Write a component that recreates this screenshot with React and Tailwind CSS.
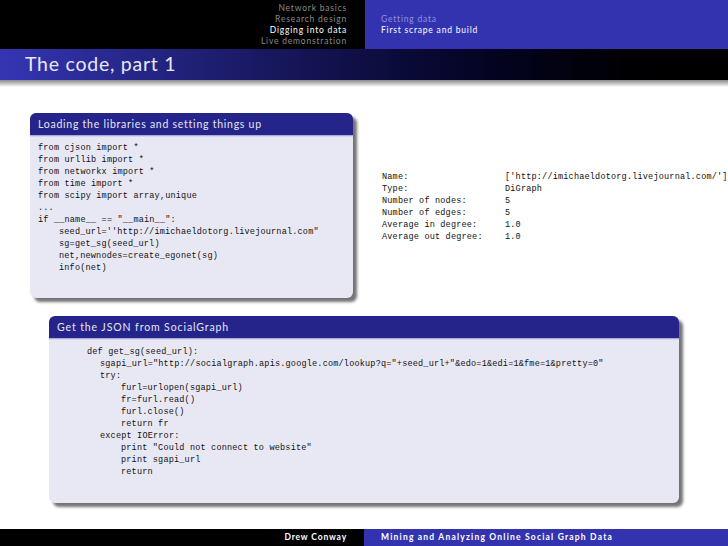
const sectionNames = ["Network basics", "Research design", "Digging into data", "Live demonstration"];

const infoRows = [
  ["Name:", "['http://imichaeldotorg.livejournal.com/']"],
  ["Type:", "DiGraph"],
  ["Number of nodes:", "5"],
  ["Number of edges:", "5"],
  ["Average in degree:", "1.0"],
  ["Average out degree:", "1.0"],
];

const loadCode = [
  [0, "from cjson import *"],
  [0, "from urllib import *"],
  [0, "from networkx import *"],
  [0, "from time import *"],
  [0, "from scipy import array,unique"],
  [0, "..."],
  [0, 'if __name__ == "__main__":'],
  [21, "seed_url=''http://imichaeldotorg.livejournal.com\""],
  [21, "sg=get_sg(seed_url)"],
  [21, "net,newnodes=create_egonet(sg)"],
  [21, "info(net)"],
];

const jsonCode = [
  [0, "def get_sg(seed_url):"],
  [13, 'sgapi_url="http://socialgraph.apis.google.com/lookup?q="+seed_url+"&edo=1&edi=1&fme=1&pretty=0"'],
  [13, "try:"],
  [34, "furl=urlopen(sgapi_url)"],
  [34, "fr=furl.read()"],
  [34, "furl.close()"],
  [34, "return fr"],
  [13, "except IOError:"],
  [34, 'print "Could not connect to website"'],
  [34, "print sgapi_url"],
  [34, "return"],
];

const monoText = "font-['Liberation_Mono',monospace] text-[8.5px] leading-[12px] tracking-[0.2px] text-[#111] whitespace-pre";

function Block({ title, code, className, bodyClass, titleClass }) {
  return (
    <div className={`rounded-[6px] shadow-[4px_4px_3px_rgba(0,0,0,0.55)] bg-[#e8e8f4] ${className}`}>
      <div className={`h-[22px] rounded-t-[6px] bg-[#24248a] pl-[8px] pt-[1px] flex items-center text-[10.5px] text-[#e6e6f4] ${titleClass}`}>
        {title}
      </div>
      <div className="h-[2px] bg-gradient-to-b from-[#9a9ad0] to-[#e8e8f4]" />
      <div className={`${monoText} ${bodyClass}`}>
        {code.map(([indent, line], i) => (
          <div key={i} style={{ paddingLeft: indent }}>
            {line}
          </div>
        ))}
      </div>
    </div>
  );
}

export default function App() {
  return (
    <div className="w-[728px] h-[546px] overflow-hidden bg-white flex flex-col font-['Lato',sans-serif]">
      <div className="h-[49px] flex text-[8.5px] leading-[11px] tracking-[0.8px]">
        <div className="w-[365px] bg-black pt-[3px] pr-[18px] text-right text-[#8a8a8a]">
          {sectionNames.map((name) => (
            <div key={name} className={name === "Digging into data" ? "text-white" : ""}>
              {name}
            </div>
          ))}
        </div>
        <div className="flex-1 bg-[#3333b0] pt-[14px] pl-[16px] text-[#8f8fdc]">
          <div>Getting data</div>
          <div className="text-white">First scrape and build</div>
        </div>
      </div>

      <div className="h-[31px] pl-[25px] pb-[2px] flex items-center bg-gradient-to-r from-[#3535b4] to-black text-[19.5px] tracking-[0.75px] text-[#e8e8f4]">
        The code, part 1
      </div>
      <div className="h-[7px] bg-gradient-to-b from-[#8a8a8a] to-white" />

      <div className="flex mt-[26px] pl-[30px]">
        <Block
          title="Loading the libraries and setting things up"
          code={loadCode}
          className="w-[323px] h-[185px]"
          titleClass="tracking-[0.75px]"
          bodyClass="pl-[8px] pt-[5px]"
        />
        <div className={`ml-[29px] mt-[58px] grid grid-cols-[123px_auto] h-fit ${monoText}`}>
          {infoRows.map(([label, value]) => (
            <div key={label} className="contents">
              <div>{label}</div>
              <div>{value}</div>
            </div>
          ))}
        </div>
      </div>

      <Block
        title="Get the JSON from SocialGraph"
        code={jsonCode}
        className="w-[630px] h-[187px] ml-[49px] mt-[18px]"
        titleClass="tracking-[0.9px]"
        bodyClass="pl-[38px] pt-[6px]"
      />

      <div className="mt-auto h-[17px] flex text-[8.5px] font-bold leading-[17px]">
        <div className="w-[364px] bg-black pr-[17px] text-right text-white tracking-[0.85px]">Drew Conway</div>
        <div className="flex-1 bg-[#3333b0] pl-[17px] text-white tracking-[1.2px]">Mining and Analyzing Online Social Graph Data</div>
      </div>
    </div>
  );
}
